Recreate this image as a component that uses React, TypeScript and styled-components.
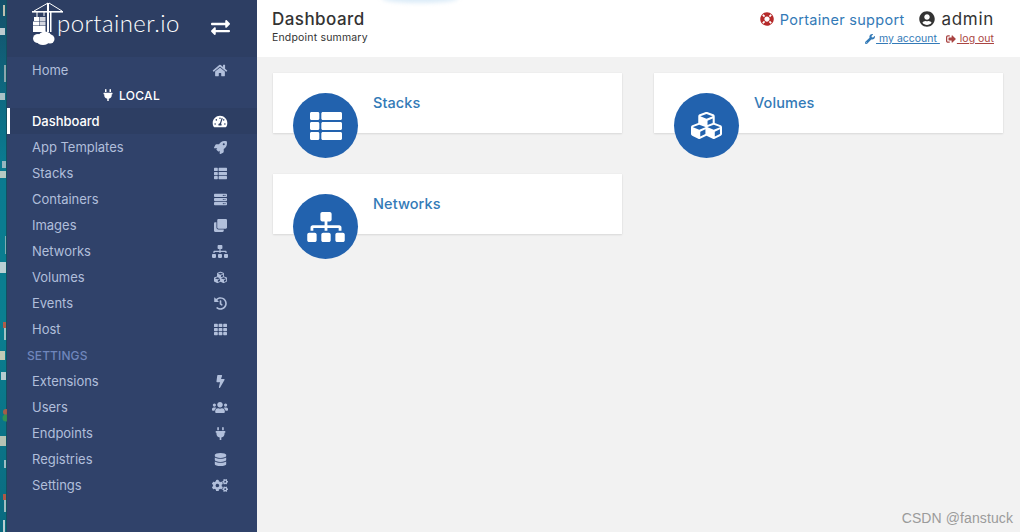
import React from "react";
import styled, { createGlobalStyle } from "styled-components";
import {
  FaHome, FaPlug, FaTachometerAlt, FaRocket, FaTh, FaThList, FaServer, FaClone, FaSitemap, FaCubes,
  FaHistory, FaBolt, FaUsers, FaDatabase, FaCogs, FaExchangeAlt, FaLifeRing, FaUserCircle, FaWrench, FaSignOutAlt,
} from "react-icons/fa";

const Global = createGlobalStyle`
  html, body { margin: 0; padding: 0; height: 532px; overflow: hidden; background: #f2f2f2; }
  body { font-family: "Inter", "Liberation Sans", sans-serif; }
`;

const Page = styled.div`
  display: flex;
  width: 1020px;
  height: 532px;
  overflow: hidden;
`;

const Desktop = styled.svg`
  flex: 0 0 7px;
  width: 7px;
  height: 532px;
  display: block;
`;

const Sidebar = styled.nav`
  flex: 0 0 250px;
  background: #30426a;
  color: #b1bfdb;
  display: flex;
  flex-direction: column;
`;

const Brand = styled.div`
  height: 57px;
  flex: 0 0 57px;
  background: #2d3e63;
  display: flex;
  align-items: flex-start;
  padding-left: 25px;
  color: #fff;
`;

const LogoText = styled.span`
  font-family: "Lato", sans-serif;
  font-weight: 300;
  font-size: 24px;
  letter-spacing: 0.4px;
  line-height: 25px;
  margin: 10px 0 0 -7px;
  width: 154px;
`;

const Swap = styled.span`
  display: flex;
  margin-top: 18px;
  font-size: 19px;
`;

const Row = styled.div<{ $active?: boolean }>`
  height: 26px;
  flex: 0 0 26px;
  box-sizing: border-box;
  display: flex;
  align-items: center;
  justify-content: space-between;
  padding: 0 27px 1px 25px;
  font-size: 13px;
  letter-spacing: -0.02px;
  font-weight: ${p => (p.$active ? 500 : 400)};
  color: ${p => (p.$active ? "#ffffff" : "#b1bfdb")};
  background: ${p => (p.$active ? "#2d3e63" : "transparent")};
  border-left: ${p => (p.$active ? "3px solid #fff" : "0")};
  padding-left: ${p => (p.$active ? "22px" : "25px")};
`;

const RowIcon = styled.span<{ $wide?: boolean }>`
  width: 20px;
  display: flex;
  justify-content: center;
  margin-top: 1px;
  svg { height: 13px; width: ${p => (p.$wide ? 16 : 13)}px; }
`;

const EndpointName = styled.div`
  height: 25px;
  flex: 0 0 25px;
  display: flex;
  align-items: center;
  justify-content: center;
  gap: 5px;
  color: #fff;
  font-size: 12px;
  font-weight: 500;
  letter-spacing: 0.3px;
  padding: 0 2px 1px 0;
  box-sizing: border-box;
`;

const SectionTitle = styled.div`
  height: 26px;
  flex: 0 0 26px;
  display: flex;
  align-items: center;
  padding-left: 20px;
  font-size: 12px;
  font-weight: 500;
  letter-spacing: 0.1px;
  color: #6f86bc;
`;

const Main = styled.main`
  flex: 1;
  background: #f2f2f2;
  position: relative;
  display: flex;
  flex-direction: column;
`;

const Glow = styled.div`
  position: absolute;
  left: 125px;
  top: -6px;
  width: 76px;
  height: 9px;
  border-radius: 50%;
  background: #dcecf8;
  filter: blur(2px);
`;

const Topbar = styled.header`
  height: 57px;
  flex: 0 0 57px;
  background: #fff;
  display: flex;
  justify-content: space-between;
  padding: 0 26px 0 15px;
`;

const TitleBlock = styled.div`
  display: flex;
  flex-direction: column;
`;

const PageTitle = styled.div`
  font-size: 17px;
  font-weight: 500;
  color: #333;
  margin-top: 9px;
  line-height: 20px;
  letter-spacing: 0.45px;
`;

const PageSub = styled.div`
  font-size: 10.5px;
  color: #333;
  margin-top: 2px;
  line-height: 14px;
  letter-spacing: 0.18px;
`;

const UserBlock = styled.div`
  display: flex;
  flex-direction: column;
  align-items: flex-end;
`;

const UserLine = styled.div`
  display: flex;
  align-items: center;
  margin-top: 9px;
  height: 20px;
  font-size: 14.5px;
`;

const Support = styled.a`
  display: flex;
  align-items: center;
  gap: 6px;
  color: #337ab7;
  margin-right: 15px;
  letter-spacing: 0.3px;
  svg { color: #b52a2a; font-size: 14px; }
`;

const Admin = styled.span`
  display: flex;
  align-items: center;
  gap: 6px;
  color: #333;
  font-size: 17px;
  letter-spacing: 0.7px;
  svg { font-size: 16px; }
`;

const AccountLine = styled.div`
  display: flex;
  gap: 6px;
  margin-top: 3px;
  font-size: 10.5px;
  line-height: 14px;
`;

const AccountLink = styled.a<{ $danger?: boolean }>`
  display: inline-flex;
  align-items: center;
  white-space: pre;
  color: ${p => (p.$danger ? "#a94442" : "#337ab7")};
  svg { font-size: 10px; margin-right: 1px; }
  span { text-decoration: underline; }
`;

const Grid = styled.section`
  display: grid;
  grid-template-columns: 349px 349px;
  grid-auto-rows: 60px;
  column-gap: 32px;
  row-gap: 41px;
  padding: 16px 0 0 16px;
`;

const Card = styled.article`
  position: relative;
  background: #fff;
  box-shadow: 0 1px 2px rgba(0, 0, 0, 0.1), 0 0 1px rgba(0, 0, 0, 0.08);
  padding: 21px 0 0 100px;
  box-sizing: border-box;
  font-size: 14.5px;
  font-weight: 500;
  line-height: 18px;
  color: #337ab7;
  letter-spacing: 0.08px;
`;

const Badge = styled.div<{ $w: number; $h: number }>`
  position: absolute;
  left: 20px;
  top: 20px;
  width: 65px;
  height: 65px;
  border-radius: 50%;
  background: #2262ae;
  color: #fff;
  display: flex;
  align-items: center;
  justify-content: center;
  svg { height: ${p => p.$h}px; width: ${p => p.$w}px; }
`;

const Watermark = styled.div`
  position: absolute;
  right: 7px;
  bottom: 6px;
  font-family: "Liberation Sans", sans-serif;
  font-size: 14px;
  line-height: 16px;
  color: #9b9b9b;
  letter-spacing: 0.1px;
`;

const LogoMark = () => (
  <svg width="32" height="46" viewBox="0 0 32 46" style={{ flex: "0 0 32px" }} fill="#fff">
    <rect x="15" y="3" width="2" height="29" />
    <rect x="18" y="12" width="1.5" height="20" />
    <rect x="0" y="11" width="31" height="1.6" />
    <path d="M16 3 L2 11 M17 3 L30 11" stroke="#fff" strokeWidth="1" fill="none" />
    <path d="M5 12 v5 M12 12 v4" stroke="#fff" strokeWidth="1" />
    <rect x="2" y="17" width="5" height="4" />
    <rect x="7.5" y="17" width="6" height="4" opacity=".8" />
    <rect x="1" y="21.5" width="6" height="4" />
    <rect x="7.5" y="21.5" width="6" height="4" opacity=".8" />
    <rect x="1" y="26" width="12.5" height="6" />
    <ellipse cx="6" cy="38.5" rx="5" ry="4.5" />
    <ellipse cx="13" cy="37" rx="6.5" ry="5.5" />
    <ellipse cx="18" cy="39" rx="4.5" ry="4.5" />
    <ellipse cx="11" cy="41.5" rx="6" ry="3.5" />
  </svg>
);

type Item = { label: string; icon: React.ReactNode; wide?: boolean };

const items1: Item[] = [
  { label: "App Templates", icon: <FaRocket /> },
  { label: "Stacks", icon: <FaThList /> },
  { label: "Containers", icon: <FaServer /> },
  { label: "Images", icon: <FaClone /> },
  { label: "Networks", icon: <FaSitemap />, wide: true },
  { label: "Volumes", icon: <FaCubes /> },
  { label: "Events", icon: <FaHistory /> },
  { label: "Host", icon: <FaTh /> },
];

const items2: Item[] = [
  { label: "Extensions", icon: <FaBolt /> },
  { label: "Users", icon: <FaUsers />, wide: true },
  { label: "Endpoints", icon: <FaPlug /> },
  { label: "Registries", icon: <FaDatabase /> },
  { label: "Settings", icon: <FaCogs />, wide: true },
];

const NavRow = ({ label, icon, active, wide }: Item & { active?: boolean }) => (
  <Row $active={active}>
    <span>{label}</span>
    <RowIcon $wide={wide}>{icon}</RowIcon>
  </Row>
);

const cards: [string, React.ReactNode, number, number][] = [
  ["Stacks", <FaThList />, 32, 32],
  ["Volumes", <FaCubes />, 31, 31],
  ["Networks", <FaSitemap />, 38, 30],
];

export default function App() {
  return (
    <Page>
      <Global />
      <Desktop viewBox="0 0 7 532" preserveAspectRatio="none">
        <defs>
          <linearGradient id="wall" x1="0" y1="0" x2="0" y2="1">
            <stop offset="0" stopColor="#14506a" />
            <stop offset="0.3" stopColor="#0a7a90" />
            <stop offset="0.6" stopColor="#0a7f90" />
            <stop offset="1" stopColor="#0a6a80" />
          </linearGradient>
        </defs>
        <rect width="7" height="532" fill="url(#wall)" />
        <rect x="6" y="0" width="1" height="532" fill="#12505f" />
        <g opacity="0.8">
          <rect x="3" y="5" width="2" height="11" fill="#e8dcc0" />
          <rect x="0" y="28" width="5" height="7" fill="#e8e8e8" />
          <rect x="4" y="65" width="2" height="17" fill="#a9b6ba" />
          <rect x="0" y="93" width="5" height="7" fill="#d0d8d8" />
          <rect x="2" y="161" width="4" height="7" fill="#b9c6cc" />
          <rect x="0" y="171" width="6" height="7" fill="#e0e0d0" />
          <rect x="5" y="236" width="1" height="18" fill="#9fb6bc" />
          <rect x="0" y="262" width="6" height="11" fill="#e6e6e6" />
          <rect x="3" y="322" width="3" height="6" fill="#d9553a" />
          <rect x="4" y="328" width="2" height="12" fill="#c9d2d2" />
          <rect x="0" y="351" width="5" height="9" fill="#f0e0c0" />
          <rect x="1" y="372" width="5" height="8" fill="#e0e0e0" />
          <circle cx="6" cy="412" r="3" fill="#c9583a" />
          <circle cx="6" cy="418" r="3.5" fill="#3a9a4a" />
          <rect x="0" y="436" width="6" height="10" fill="#e0d8c0" />
          <rect x="4" y="460" width="2" height="8" fill="#c4d0d4" />
          <rect x="3" y="494" width="3" height="6" fill="#d9553a" />
          <rect x="4" y="500" width="2" height="12" fill="#c9d2d2" />
          <rect x="3" y="520" width="2" height="12" fill="#e6e6e6" />
        </g>
      </Desktop>
      <Sidebar>
        <Brand>
          <LogoMark />
          <LogoText>portainer.io</LogoText>
          <Swap><FaExchangeAlt /></Swap>
        </Brand>
        <NavRow label="Home" icon={<FaHome />} wide />
        <EndpointName><FaPlug size={12} /> LOCAL</EndpointName>
        <NavRow label="Dashboard" icon={<FaTachometerAlt />} wide active />
        {items1.map(i => <NavRow key={i.label} {...i} />)}
        <SectionTitle>SETTINGS</SectionTitle>
        {items2.map(i => <NavRow key={i.label} {...i} />)}
      </Sidebar>
      <Main>
        <Glow />
        <Topbar>
          <TitleBlock>
            <PageTitle>Dashboard</PageTitle>
            <PageSub>Endpoint summary</PageSub>
          </TitleBlock>
          <UserBlock>
            <UserLine>
              <Support><FaLifeRing />Portainer support</Support>
              <Admin><FaUserCircle />admin</Admin>
            </UserLine>
            <AccountLine>
              <AccountLink><FaWrench /><span> my account </span></AccountLink>
              <AccountLink $danger><FaSignOutAlt /><span> log out</span></AccountLink>
            </AccountLine>
          </UserBlock>
        </Topbar>
        <Grid>
          {cards.map(([l, i, w, h]) => (
            <Card key={l}>
              <Badge $w={w} $h={h}>{i}</Badge>
              {l}
            </Card>
          ))}
        </Grid>
        <Watermark>CSDN @fanstuck</Watermark>
      </Main>
    </Page>
  );
}
